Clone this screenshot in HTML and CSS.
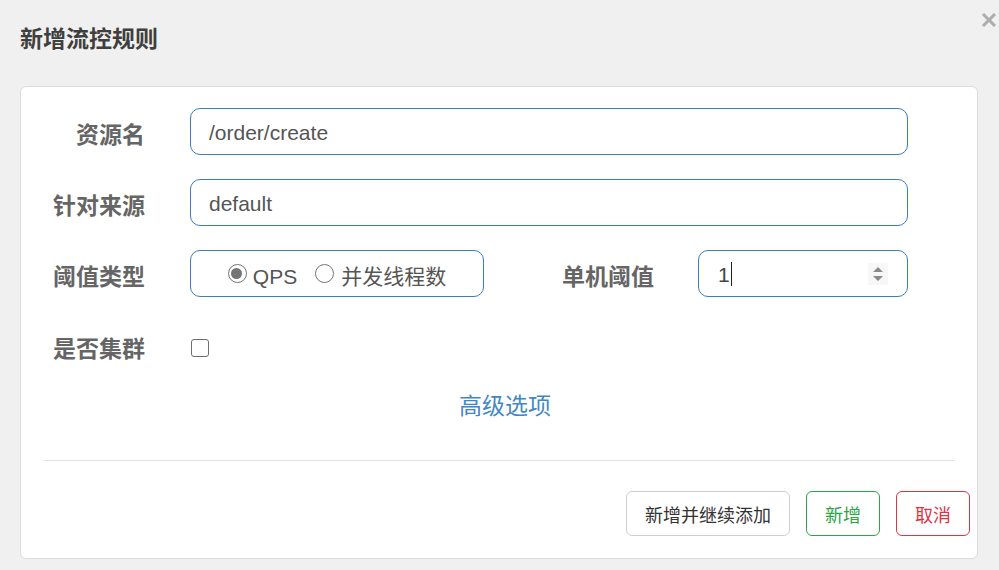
FILE: index.html
```html
<!DOCTYPE html>
<html lang="zh">
<head>
<meta charset="utf-8">
<title>新增流控规则</title>
<link rel="stylesheet" href="styles.css">
</head>
<body>
<div class="dialog">
  <div class="header">
    <h3 class="title">新增流控规则</h3>
    <span class="close" aria-label="关闭">
      <svg width="16" height="16" viewBox="0 0 16 16"><path d="M2 2 L14 14 M14 2 L2 14" stroke="#adadad" stroke-width="3" stroke-linecap="butt"/></svg>
    </span>
  </div>
  <div class="card">
    <div class="form">
      <div class="row">
        <label class="label">资源名</label>
        <div class="input wide">/order/create</div>
      </div>
      <div class="row">
        <label class="label">针对来源</label>
        <div class="input wide">default</div>
      </div>
      <div class="row">
        <label class="label">阈值类型</label>
        <div class="split">
          <div class="input radios">
            <span class="radio checked"></span><span class="rtext">QPS</span>
            <span class="radio"></span><span class="rtext">并发线程数</span>
          </div>
          <label class="label label2">单机阈值</label>
          <div class="input number"><span class="val">1</span><span class="caret"></span><span class="spin"><svg width="12" height="18" viewBox="0 0 12 18"><path d="M1 7 L6 2 L11 7 Z M1 11 L6 16 L11 11 Z" fill="#8a8a8a"/></svg></span></div>
        </div>
      </div>
      <div class="row row-check">
        <label class="label">是否集群</label>
        <span class="checkbox"></span>
      </div>
      <div class="advanced"><a class="link">高级选项</a></div>
    </div>
    <div class="sep"></div>
    <div class="footer">
      <button class="btn">新增并继续添加</button>
      <button class="btn btn-green">新增</button>
      <button class="btn btn-red">取消</button>
    </div>
  </div>
</div>
</body>
</html>
```
FILE: styles.css
```css
html, body {
  margin: 0;
  padding: 0;
  background: #f0f0f0;
}
body {
  width: 999px;
  height: 570px;
  overflow: hidden;
  font-family: "Liberation Sans", "Noto Sans CJK SC", sans-serif;
}
.dialog {
  padding: 0 21px 0 20px;
}
.header {
  position: relative;
  height: 86px;
  display: flex;
  align-items: center;
}
.title {
  margin: 0;
  margin-top: -13px;
  font-family: "Noto Sans CJK SC", sans-serif;
  font-size: 23px;
  font-weight: bold;
  color: #3f3f3f;
}
.close {
  position: absolute;
  right: -19px;
  top: 12px;
  width: 16px;
  height: 16px;
}
.close svg { display: block; }
.card {
  background: #fff;
  border: 1px solid #dcdcdc;
  border-radius: 6px;
  height: 473px;
  box-sizing: border-box;
  padding: 21px 22px 0 22px;
}
.form {
  display: flex;
  flex-direction: column;
  gap: 24px;
}
.row {
  display: flex;
  align-items: center;
  height: 47px;
}
.label {
  width: 102px;
  text-align: right;
  font-family: "Noto Sans CJK SC", sans-serif;
  font-size: 23px;
  font-weight: bold;
  color: #656565;
  margin-right: 45px;
  flex: none;
  line-height: 47px;
  margin-top: 4px;
}
.input {
  box-sizing: border-box;
  height: 47px;
  border: 1px solid #3c7cbf;
  border-radius: 10px;
  padding: 0 18px;
  display: flex;
  align-items: center;
  font-size: 21px;
  color: #555;
}
.wide { width: 718px; padding-top: 3px; }
.split {
  display: flex;
  align-items: center;
}
.radios {
  width: 294px;
  justify-content: center;
  padding: 0;
  font-family: "Noto Sans CJK SC", "Liberation Sans", sans-serif;
}
.radios .rtext {
  font-family: "Liberation Sans", "Noto Sans CJK SC", sans-serif;
  font-size: 21px;
  color: #555;
  margin-top: 6px;
}
.radios .rtext:last-child {
  font-family: "Noto Sans CJK SC", sans-serif;
  font-size: 21px;
  margin-top: 3px;
}
.radio {
  box-sizing: border-box;
  width: 19px;
  height: 19px;
  border: 1.5px solid #757575;
  border-radius: 50%;
  margin-right: 6px;
  position: relative;
  flex: none;
}
.radio + .rtext + .radio { margin-left: 18px; margin-right: 7px; }
.radio.checked::after {
  content: "";
  position: absolute;
  left: 2.5px;
  top: 2.5px;
  width: 11px;
  height: 11px;
  border-radius: 50%;
  background: #757575;
}
.label2 {
  width: 170px;
  margin-right: 44px;
}
.number {
  width: 210px;
  padding: 0 0 0 19px;
  position: relative;
}
.number .val {
  font-size: 21px;
  color: #444;
  margin-top: 2px;
}
.caret {
  display: inline-block;
  width: 1.5px;
  height: 24px;
  background: #222;
  margin-left: 1px;
}
.spin {
  position: absolute;
  right: 19px;
  top: 12px;
  width: 20px;
  height: 22px;
  background: #f7f7f7;
  display: flex;
  align-items: center;
  justify-content: center;
}
.spin svg { display: block; }
.row-check .label { margin-top: 6px; margin-right: 46px; }
.checkbox {
  box-sizing: border-box;
  width: 18px;
  height: 18px;
  border: 1.5px solid #6f6f6f;
  border-radius: 3px;
  margin-top: 6px;
}
.advanced {
  text-align: center;
  margin-top: -5px;
  padding-left: 12px;
  height: 73px;
}
.link {
  font-family: "Noto Sans CJK SC", sans-serif;
  font-size: 23px;
  color: #3f88c8;
  cursor: pointer;
}
.sep {
  height: 1px;
  background: #e4e4e4;
}
.footer {
  display: flex;
  justify-content: flex-end;
  gap: 16px;
  margin-top: 30px;
  margin-right: -15px;
}
.btn {
  box-sizing: border-box;
  height: 45px;
  padding: 0 18px;
  background: #fff;
  border: 1px solid #cfcfcf;
  border-radius: 6px;
  font-family: "Noto Sans CJK SC", sans-serif;
  font-size: 18px;
  color: #333;
}
.btn-green {
  border-color: #28a745;
  color: #28a745;
}
.btn-red {
  border-color: #dc3545;
  color: #dc3545;
}
```
